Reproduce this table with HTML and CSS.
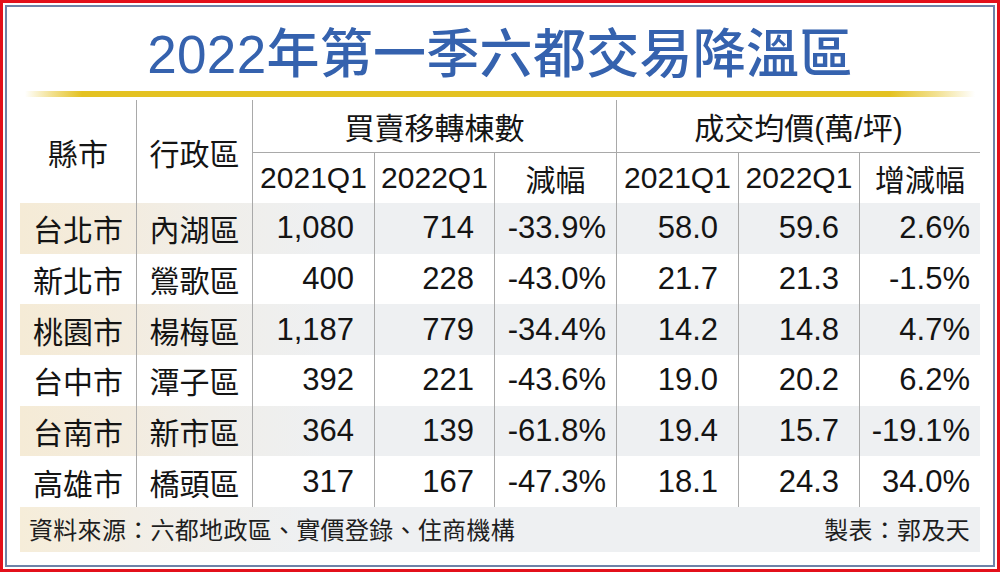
FILE: index.html
```html
<!DOCTYPE html>
<html lang="zh-Hant">
<head>
<meta charset="utf-8">
<title>2022年第一季六都交易降溫區</title>
<link rel="stylesheet" href="styles.css">
</head>
<body>
<div class="frame">
  <div class="panel">
    <h1 class="title">2022年第一季六都交易降溫區</h1>
    <div class="rule"></div>
    <div class="table">
      <div class="head">
        <div class="hc city">縣市</div>
        <div class="hc dist bl">行政區</div>
        <div class="hc grp1 bl bb">買賣移轉棟數</div>
        <div class="hc grp2 bl bb">成交均價(萬/坪)</div>
        <div class="hc bl">2021Q1</div>
        <div class="hc bl">2022Q1</div>
        <div class="hc bl">減幅</div>
        <div class="hc bl">2021Q1</div>
        <div class="hc bl">2022Q1</div>
        <div class="hc bl">增減幅</div>
      </div>
      <div class="row alt">
        <div class="cell txt">台北市</div><div class="cell txt bl">內湖區</div>
        <div class="cell num bl">1,080</div><div class="cell num bl">714</div><div class="cell pct bl">-33.9%</div>
        <div class="cell num bl">58.0</div><div class="cell num bl">59.6</div><div class="cell pct bl">2.6%</div>
      </div>
      <div class="row">
        <div class="cell txt">新北市</div><div class="cell txt bl">鶯歌區</div>
        <div class="cell num bl">400</div><div class="cell num bl">228</div><div class="cell pct bl">-43.0%</div>
        <div class="cell num bl">21.7</div><div class="cell num bl">21.3</div><div class="cell pct bl">-1.5%</div>
      </div>
      <div class="row alt">
        <div class="cell txt">桃園市</div><div class="cell txt bl">楊梅區</div>
        <div class="cell num bl">1,187</div><div class="cell num bl">779</div><div class="cell pct bl">-34.4%</div>
        <div class="cell num bl">14.2</div><div class="cell num bl">14.8</div><div class="cell pct bl">4.7%</div>
      </div>
      <div class="row">
        <div class="cell txt">台中市</div><div class="cell txt bl">潭子區</div>
        <div class="cell num bl">392</div><div class="cell num bl">221</div><div class="cell pct bl">-43.6%</div>
        <div class="cell num bl">19.0</div><div class="cell num bl">20.2</div><div class="cell pct bl">6.2%</div>
      </div>
      <div class="row alt">
        <div class="cell txt">台南市</div><div class="cell txt bl">新市區</div>
        <div class="cell num bl">364</div><div class="cell num bl">139</div><div class="cell pct bl">-61.8%</div>
        <div class="cell num bl">19.4</div><div class="cell num bl">15.7</div><div class="cell pct bl">-19.1%</div>
      </div>
      <div class="row">
        <div class="cell txt">高雄市</div><div class="cell txt bl">橋頭區</div>
        <div class="cell num bl">317</div><div class="cell num bl">167</div><div class="cell pct bl">-47.3%</div>
        <div class="cell num bl">18.1</div><div class="cell num bl">24.3</div><div class="cell pct bl">34.0%</div>
      </div>
      <div class="foot">
        <span>資料來源：六都地政區、實價登錄、住商機構</span>
        <span>製表：郭及天</span>
      </div>
    </div>
  </div>
</div>
</body>
</html>
```
FILE: styles.css
```css
html, body {
  margin: 0;
  padding: 0;
  background: #ffffff;
}
body {
  font-family: "Liberation Sans", "Noto Sans CJK TC", sans-serif;
  color: #141414;
}
.frame {
  box-sizing: border-box;
  width: 1000px;
  height: 572px;
  border: 3px solid #e3101b;
  padding: 2px;
}
.panel {
  box-sizing: border-box;
  height: 100%;
  border: 2px solid #6f83a8;
  padding: 0 13px;
  display: flex;
  flex-direction: column;
}
.title {
  margin: 0;
  height: 84px;
  display: flex;
  align-items: center;
  justify-content: center;
  padding-top: 1px;
  box-sizing: border-box;
  font-family: "Liberation Sans", "Noto Sans CJK TC", sans-serif;
  font-size: 53px;
  font-weight: 500;
  color: #3562ae;
  letter-spacing: 0.3px;
}
.rule {
  height: 6px;
  margin: 0 5px 3px;
  background: linear-gradient(to right,
    rgba(230, 196, 40, 0) 0%,
    rgba(230, 196, 40, 0.55) 3%,
    #e4c221 6%,
    #e4c221 91%,
    rgba(230, 196, 40, 0.5) 96%,
    rgba(230, 196, 40, 0) 100%);
}
.table {
  width: 960px;
}
.head, .row {
  display: grid;
  grid-template-columns: 116px 116px 122px 120px 122px 122px 121px 121px;
}
.head {
  grid-template-rows: 53px 50px;
}
.hc, .cell {
  box-sizing: border-box;
  display: flex;
  align-items: center;
}
.hc {
  justify-content: center;
  font-size: 30px;
}
.city {
  grid-column: 1;
  grid-row: 1 / 3;
}
.dist {
  grid-column: 2;
  grid-row: 1 / 3;
}
.grp1 {
  grid-column: 3 / 6;
  grid-row: 1;
}
.grp2 {
  grid-column: 6 / 9;
  grid-row: 1;
}
.bl {
  border-left: 1px solid #a9a9a9;
}
.bb {
  border-bottom: 1px solid #a9a9a9;
}
.row {
  height: 50.67px;
}
.row.alt {
  background: linear-gradient(to right,
    #f5ebd6 0%,
    #f3ecdf 11%,
    #f0eee9 20%,
    #eef0f2 32%,
    #eef0f2 100%);
}
.cell.txt {
  justify-content: center;
  font-size: 30px;
}
.cell.num, .cell.pct {
  justify-content: flex-end;
  font-size: 31px;
}
.cell.num {
  padding-right: 20px;
}
.cell.pct {
  padding-right: 10px;
}
.foot {
  height: 45px;
  box-sizing: border-box;
  display: flex;
  align-items: center;
  justify-content: space-between;
  padding: 0 10px 2px 9px;
  font-size: 24px;
  letter-spacing: 0.3px;
  color: #1e1e1e;
  background: linear-gradient(to right,
    #f6edd9 0%,
    #f2eee6 12%,
    #eef0f2 30%,
    #eef0f2 100%);
}
```
